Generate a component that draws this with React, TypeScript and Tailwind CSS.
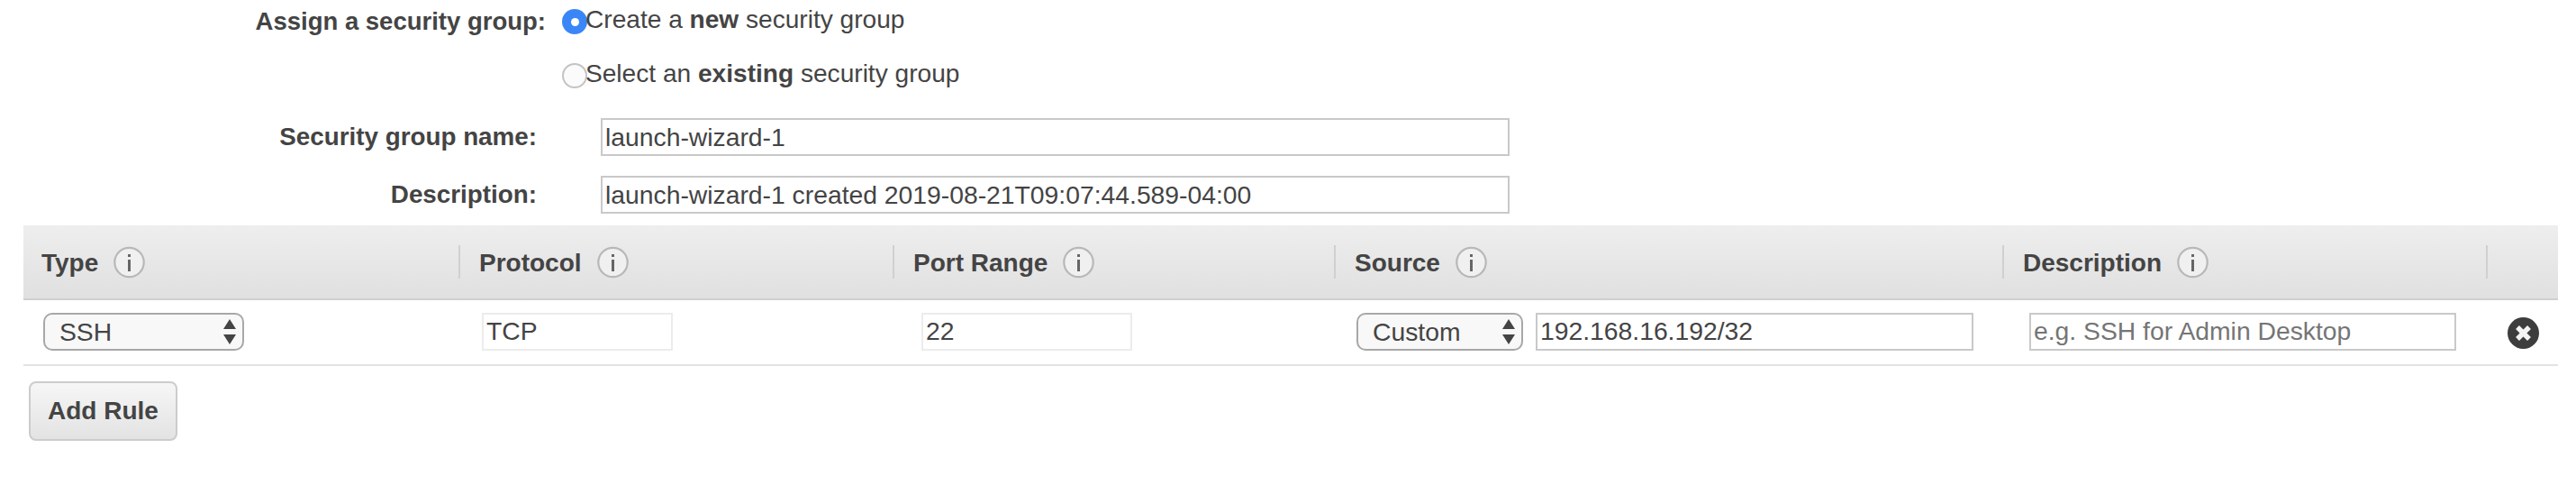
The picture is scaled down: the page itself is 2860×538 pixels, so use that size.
import React from 'react';

const ruleColumns = 'grid grid-cols-[483px_482px_490px_742px_537px_80px]';

function InfoIcon() {
  return (
    <svg width="35" height="36" viewBox="0 0 35 36" className="shrink-0">
      <circle cx="17.5" cy="18" r="16.2" fill="#f0f0f0" stroke="#b8b8b8" strokeWidth="2.2" />
      <rect x="16" y="15" width="3" height="13" fill="#666" />
      <rect x="16" y="9" width="3" height="3" fill="#666" />
    </svg>
  );
}

function RemoveIcon() {
  return (
    <svg width="35" height="35" viewBox="0 0 35 35">
      <circle cx="17.5" cy="17.5" r="17.5" fill="#3d3d3d" />
      <path d="M11 11 L24 24 M24 11 L11 24" stroke="#f4f4f4" strokeWidth="5.5" />
    </svg>
  );
}

function HeaderCell({ label, first }: { label?: string; first?: boolean }) {
  return (
    <div className="flex h-full items-center">
      <div
        className={`flex h-[37px] items-center gap-[17px] ${
          first ? 'pl-[20px]' : 'border-l-2 border-[#d0d0d0] pl-[21px]'
        }`}
      >
        {label && <span className="pt-[3px] text-[28px] font-bold text-[#444]">{label}</span>}
        {label && <InfoIcon />}
      </div>
    </div>
  );
}

function SelectBox({ value, width }: { value: string; width: string }) {
  return (
    <div
      className={`flex h-[42px] ${width} items-center justify-between rounded-[10px] border-2 border-[#a8a8a8] bg-[#f8f8f8] pl-[16px] pr-[7px] text-[28.3px] text-[#444]`}
    >
      <span className="pt-[2px]">{value}</span>
      <svg width="14" height="30" viewBox="0 0 14 30">
        <path d="M7 1 L14 12 L0 12 Z M0 18 L14 18 L7 29 Z" fill="#444" />
      </svg>
    </div>
  );
}

function TextBox({
  value,
  placeholder,
  width,
  muted,
}: {
  value?: string;
  placeholder?: string;
  width: string;
  muted?: boolean;
}) {
  return (
    <input
      readOnly
      value={value}
      placeholder={placeholder}
      className={`h-[42px] ${width} border-2 ${
        muted ? 'border-[#ececec]' : 'border-[#c9c9c9]'
      } bg-white px-[3px] text-[28.3px] text-[#444] outline-none placeholder:text-[#757575]`}
    />
  );
}

function RadioOption({ checked, children }: { checked?: boolean; children: React.ReactNode }) {
  return (
    <div className="flex h-[28px] items-center text-[28.1px] text-[#444]">
      {checked ? (
        <span className="flex h-[28px] w-[28px] shrink-0 items-center justify-center rounded-full bg-[#3b86f7]">
          <span className="h-[9px] w-[9px] rounded-full bg-white" />
        </span>
      ) : (
        <span className="h-[28px] w-[28px] shrink-0 rounded-full border-2 border-[#c4c4c4] bg-[#fbfbfb]" />
      )}
      <span className="-ml-[2px] -mt-[3px]">{children}</span>
    </div>
  );
}

export default function App() {
  return (
    <div className="h-[538px] w-[2860px] overflow-hidden bg-white pt-[10px] font-['Liberation_Sans',Arial,sans-serif]">
      {/* Security group form */}
      <div className="flex">
        <div className="w-[606px] text-right text-[27.5px] font-bold leading-[28px] text-[#444]">
          Assign a security group:
        </div>
        <div className="ml-[18px] flex flex-col gap-[32px]">
          <RadioOption checked>
            Create a <b>new</b> security group
          </RadioOption>
          <RadioOption>
            Select an <b>existing</b> security group
          </RadioOption>
        </div>
      </div>

      <div className="mt-[33px] flex items-center">
        <div className="w-[596px] text-right text-[27.8px] font-bold text-[#444]">Security group name:</div>
        <div className="ml-[71px]">
          <TextBox value="launch-wizard-1" width="w-[1009px]" />
        </div>
      </div>
      <div className="mt-[22px] flex items-center">
        <div className="w-[596px] text-right text-[27.8px] font-bold text-[#444]">Description:</div>
        <div className="ml-[71px]">
          <TextBox value="launch-wizard-1 created 2019-08-21T09:07:44.589-04:00" width="w-[1009px]" />
        </div>
      </div>

      {/* Inbound rules table */}
      <div className="ml-[26px] mt-[13px] w-[2814px]">
        <div className={`${ruleColumns} h-[83px] border-b-2 border-[#cfcfcf] bg-gradient-to-b from-[#eeeeee] to-[#e0e0e0]`}>
          <HeaderCell label="Type" first />
          <HeaderCell label="Protocol" />
          <HeaderCell label="Port Range" />
          <HeaderCell label="Source" />
          <HeaderCell label="Description" />
          <HeaderCell />
        </div>

        <div className={`${ruleColumns} h-[73px] items-center border-b-2 border-[#e3e3e3] pb-[2px]`}>
          <div className="pl-[22px]">
            <SelectBox value="SSH" width="w-[223px]" />
          </div>
          <div className="pl-[26px]">
            <TextBox value="TCP" width="w-[212px]" muted />
          </div>
          <div className="pl-[32px]">
            <TextBox value="22" width="w-[234px]" muted />
          </div>
          <div className="flex items-center gap-[14px] pl-[25px]">
            <SelectBox value="Custom" width="w-[185px]" />
            <TextBox value="192.168.16.192/32" width="w-[486px]" />
          </div>
          <div className="pl-[30px]">
            <TextBox placeholder="e.g. SSH for Admin Desktop" width="w-[474px]" />
          </div>
          <div className="flex items-center pl-[24px] pt-[3px]">
            <RemoveIcon />
          </div>
        </div>

        <button className="ml-[6px] mt-[17px] h-[66px] w-[165px] rounded-[8px] border-2 border-[#cccccc] bg-gradient-to-b from-[#f6f6f6] to-[#e3e3e3] text-[28px] font-bold text-[#444]">
          Add Rule
        </button>
      </div>
    </div>
  );
}
